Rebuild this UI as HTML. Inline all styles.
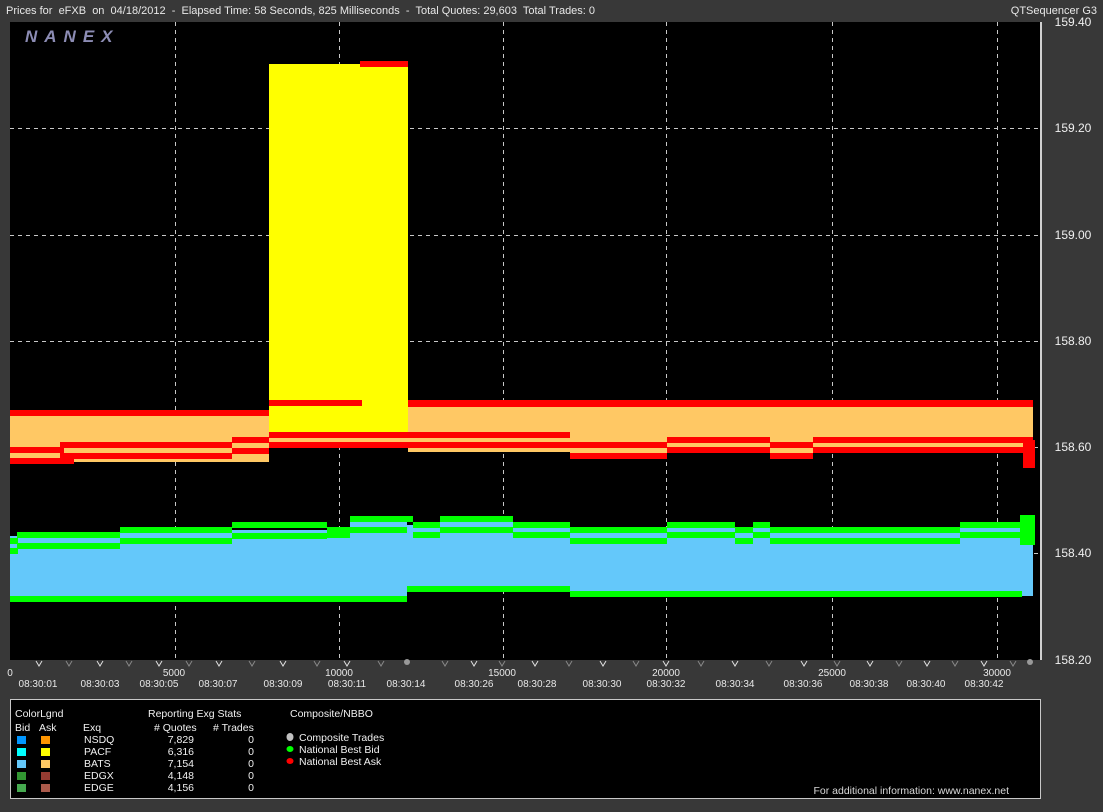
<!DOCTYPE html>
<html><head><meta charset="utf-8"><style>
html,body{margin:0;padding:0;background:#383838;}
body{width:1103px;height:807px;overflow:hidden;position:relative;font-family:"Liberation Sans",Arial,sans-serif;}
svg text{font-family:"Liberation Sans",Arial,sans-serif;white-space:pre;}
</style></head><body>
<svg width="1103" height="807" viewBox="0 0 1103 807" xmlns="http://www.w3.org/2000/svg" xml:space="preserve">
<rect x="0" y="0" width="1103" height="807" fill="#383838"/>
<text x="6" y="14" font-size="11" fill="#e8e8e8">Prices for  eFXB  on  04/18/2012  -  Elapsed Time: 58 Seconds, 825 Milliseconds  -  Total Quotes: 29,603  Total Trades: 0</text>
<text x="1097" y="14" font-size="11" fill="#e8e8e8" text-anchor="end">QTSequencer G3</text>
<rect x="10" y="22" width="1031" height="638" fill="#000"/>
<g stroke="#c8c8c8" stroke-width="1" stroke-dasharray="4,4">
<line x1="175.5" y1="22" x2="175.5" y2="660"/><line x1="339.5" y1="22" x2="339.5" y2="660"/><line x1="503.5" y1="22" x2="503.5" y2="660"/>
<line x1="666.5" y1="22" x2="666.5" y2="660"/><line x1="832.5" y1="22" x2="832.5" y2="660"/><line x1="997.5" y1="22" x2="997.5" y2="660"/>
<line x1="10" y1="128.5" x2="1041" y2="128.5"/><line x1="10" y1="235.5" x2="1041" y2="235.5"/><line x1="10" y1="341.5" x2="1041" y2="341.5"/>
<line x1="10" y1="447.5" x2="1041" y2="447.5"/><line x1="10" y1="553.5" x2="1041" y2="553.5"/>
</g>
<text x="25" y="42" font-size="17" font-weight="bold" font-style="italic" fill="#8c8cb4" letter-spacing="7">NANEX</text>
<rect x="10" y="414" width="259" height="48" fill="#ffc864"/>
<rect x="269" y="64" width="139" height="370" fill="#ffff00"/>
<rect x="269" y="434" width="139" height="12" fill="#ffc864"/>
<rect x="408" y="404" width="625" height="48" fill="#ffc864"/>
<rect x="570" y="446" width="97" height="11" fill="#ffc864"/>
<rect x="770" y="446" width="43" height="11" fill="#ffc864"/>
<g fill="#ff0000">
<rect x="10" y="410" width="259" height="6"/>
<rect x="10" y="447" width="54" height="6"/><rect x="10" y="458" width="64" height="6"/>
<rect x="60" y="442" width="172" height="6"/><rect x="60" y="453" width="172" height="6"/>
<rect x="232" y="437" width="37" height="6"/><rect x="232" y="448" width="37" height="6"/>
<rect x="269" y="432" width="139" height="6"/><rect x="269" y="442" width="139" height="6"/>
<rect x="269" y="400" width="93" height="6"/>
<rect x="360" y="61" width="48" height="6"/>
<rect x="408" y="400" width="625" height="7"/>
<rect x="408" y="432" width="162" height="6"/><rect x="408" y="442" width="162" height="6"/>
<rect x="570" y="442" width="97" height="6"/><rect x="570" y="453" width="97" height="6"/>
<rect x="667" y="437" width="103" height="6"/><rect x="667" y="447" width="103" height="6"/>
<rect x="770" y="442" width="43" height="6"/><rect x="770" y="453" width="43" height="6"/>
<rect x="813" y="437" width="220" height="6"/><rect x="813" y="447" width="220" height="6"/>
<rect x="1023" y="440" width="12" height="28"/>
</g>
<g fill="#64c8fa">
<rect x="10" y="536" width="110" height="64"/>
<rect x="120" y="530" width="230" height="70"/>
<rect x="350" y="520" width="57" height="80"/>
<rect x="407" y="525" width="33" height="65"/>
<rect x="440" y="520" width="73" height="70"/>
<rect x="513" y="525" width="57" height="65"/>
<rect x="570" y="530" width="97" height="65"/>
<rect x="667" y="525" width="68" height="70"/>
<rect x="735" y="530" width="18" height="65"/>
<rect x="753" y="525" width="17" height="70"/>
<rect x="770" y="530" width="190" height="65"/>
<rect x="960" y="525" width="73" height="71"/>
</g>
<g fill="#00ff00">
<rect x="10" y="538" width="8" height="6"/><rect x="10" y="548" width="8" height="6"/>
<rect x="17" y="532" width="103" height="6"/><rect x="17" y="543" width="103" height="6"/>
<rect x="120" y="527" width="112" height="6"/><rect x="120" y="538" width="112" height="6"/>
<rect x="232" y="522" width="95" height="6"/><rect x="232" y="533" width="95" height="6"/>
<rect x="327" y="527" width="23" height="11"/>
<rect x="350" y="516" width="57" height="6"/><rect x="350" y="527" width="57" height="6"/>
<rect x="10" y="596" width="397" height="6"/>
<rect x="400" y="516" width="13" height="6"/>
<rect x="413" y="522" width="27" height="6"/><rect x="413" y="532" width="27" height="6"/>
<rect x="440" y="516" width="73" height="6"/><rect x="440" y="527" width="73" height="6"/>
<rect x="513" y="522" width="57" height="6"/><rect x="513" y="532" width="57" height="6"/>
<rect x="570" y="527" width="97" height="6"/><rect x="570" y="538" width="97" height="6"/>
<rect x="667" y="522" width="68" height="6"/><rect x="667" y="532" width="68" height="6"/>
<rect x="735" y="527" width="18" height="6"/><rect x="735" y="538" width="18" height="6"/>
<rect x="753" y="522" width="17" height="6"/><rect x="753" y="532" width="17" height="6"/>
<rect x="770" y="527" width="190" height="6"/><rect x="770" y="538" width="190" height="6"/>
<rect x="960" y="522" width="63" height="6"/><rect x="960" y="532" width="63" height="6"/>
<rect x="407" y="586" width="163" height="6"/><rect x="570" y="591" width="452" height="6"/>
<rect x="1020" y="515" width="15" height="30"/>
</g>
<line x1="1041" y1="22" x2="1041" y2="660" stroke="#d0d0d0" stroke-width="2"/>
<g font-size="12" fill="#f0f0f0" text-anchor="middle">
<text x="1073" y="26">159.40</text><text x="1073" y="132">159.20</text><text x="1073" y="239">159.00</text>
<text x="1073" y="345">158.80</text><text x="1073" y="451">158.60</text><text x="1073" y="557">158.40</text><text x="1073" y="664">158.20</text>
</g>
<g fill="none" stroke="#e0e0e0" stroke-width="1">
<path d="M36 661l3 5l3-5M97 661l3 5l3-5M156 661l3 5l3-5M216 661l3 5l3-5M280 661l3 5l3-5M344 661l3 5l3-5M471 661l3 5l3-5M532 661l3 5l3-5M600 661l3 5l3-5M663 661l3 5l3-5M732 661l3 5l3-5M801 661l3 5l3-5M867 661l3 5l3-5M924 661l3 5l3-5M981 661l3 5l3-5"/>
</g>
<g fill="none" stroke="#888" stroke-width="1">
<path d="M66 661l3 5l3-5M126 661l3 5l3-5M186 661l3 5l3-5M249 661l3 5l3-5M314 661l3 5l3-5M378 661l3 5l3-5M442 661l3 5l3-5M499 661l3 5l3-5M566 661l3 5l3-5M633 661l3 5l3-5M698 661l3 5l3-5M766 661l3 5l3-5M834 661l3 5l3-5M896 661l3 5l3-5M952 661l3 5l3-5M1010 661l3 5l3-5"/>
</g>
<circle cx="407" cy="662" r="3" fill="#999"/><circle cx="1030" cy="662" r="3" fill="#999"/>
<g font-size="10" fill="#e8e8e8" text-anchor="middle">
<text x="10" y="676">0</text><text x="174" y="676">5000</text><text x="339" y="676">10000</text><text x="502" y="676">15000</text>
<text x="666" y="676">20000</text><text x="832" y="676">25000</text><text x="997" y="676">30000</text>
<text x="38" y="687">08:30:01</text><text x="100" y="687">08:30:03</text><text x="159" y="687">08:30:05</text><text x="218" y="687">08:30:07</text>
<text x="283" y="687">08:30:09</text><text x="347" y="687">08:30:11</text><text x="406" y="687">08:30:14</text><text x="474" y="687">08:30:26</text>
<text x="537" y="687">08:30:28</text><text x="602" y="687">08:30:30</text><text x="666" y="687">08:30:32</text><text x="735" y="687">08:30:34</text>
<text x="803" y="687">08:30:36</text><text x="869" y="687">08:30:38</text><text x="926" y="687">08:30:40</text><text x="984" y="687">08:30:42</text>
</g>
<rect x="10.5" y="699.5" width="1030" height="99" fill="#000" stroke="#c8c8c8" stroke-width="1"/>
<g font-size="10.5" fill="#f0f0f0">
<text x="15" y="717">ColorLgnd</text>
<text x="15" y="731">Bid</text><text x="39" y="731">Ask</text><text x="83" y="731">Exq</text>
<text x="148" y="717">Reporting Exg Stats</text>
<text x="154" y="731"># Quotes</text><text x="213" y="731"># Trades</text>
<text x="290" y="717">Composite/NBBO</text>
<text x="84" y="743">NSDQ</text><text x="84" y="755">PACF</text><text x="84" y="767">BATS</text><text x="84" y="779">EDGX</text><text x="84" y="791">EDGE</text>
<g text-anchor="end">
<text x="194" y="743">7,829</text><text x="194" y="755">6,316</text><text x="194" y="767">7,154</text><text x="194" y="779">4,148</text><text x="194" y="791">4,156</text>
<text x="254" y="743">0</text><text x="254" y="755">0</text><text x="254" y="767">0</text><text x="254" y="779">0</text><text x="254" y="791">0</text>
</g>
<text x="299" y="741">Composite Trades</text><text x="299" y="753">National Best Bid</text><text x="299" y="765">National Best Ask</text>
<text x="1009" y="794" fill="#d8d8d8" text-anchor="end">For additional information: www.nanex.net</text>
</g>
<rect x="17" y="736" width="9" height="8" fill="#0096ff"/><rect x="41" y="736" width="9" height="8" fill="#ff9600"/>
<rect x="17" y="748" width="9" height="8" fill="#00ffff"/><rect x="41" y="748" width="9" height="8" fill="#ffff00"/>
<rect x="17" y="760" width="9" height="8" fill="#64c8fa"/><rect x="41" y="760" width="9" height="8" fill="#ffc864"/>
<rect x="17" y="772" width="9" height="8" fill="#329632"/><rect x="41" y="772" width="9" height="8" fill="#963c32"/>
<rect x="17" y="784" width="9" height="8" fill="#46aa50"/><rect x="41" y="784" width="9" height="8" fill="#aa5a4b"/>
<ellipse cx="290" cy="737" rx="3.5" ry="4" fill="#c0c0c0"/>
<ellipse cx="290" cy="749" rx="3.5" ry="3" fill="#00ff00"/>
<ellipse cx="290" cy="761" rx="3.5" ry="3" fill="#ff0000"/>
</svg>
</body></html>
